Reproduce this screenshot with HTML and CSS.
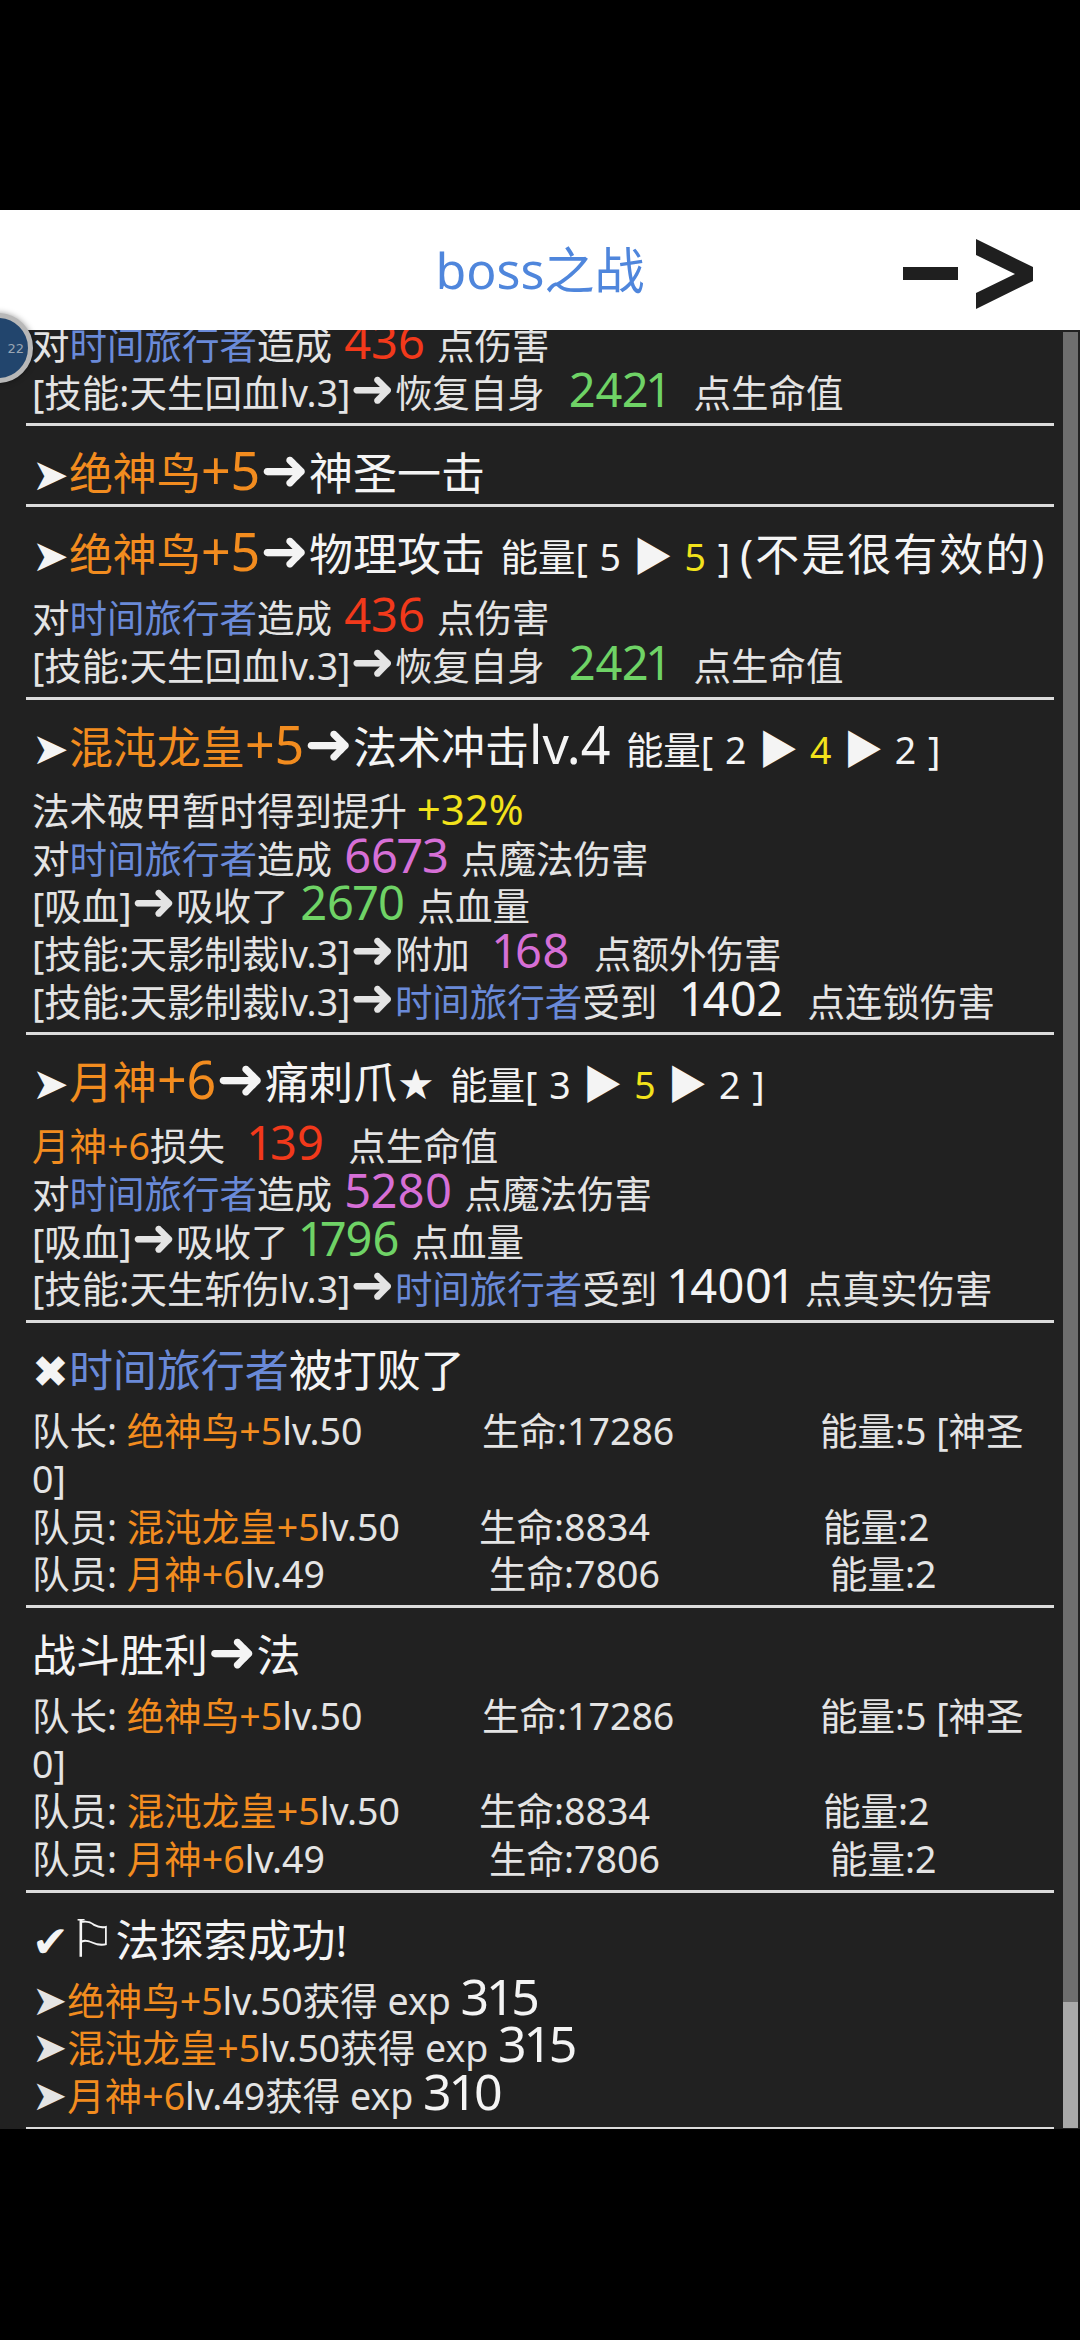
FILE: index.html
```html
<!DOCTYPE html>
<html lang="zh-CN">
<head>
    <meta charset="UTF-8">
    <meta name="viewport" content="width=device-width, initial-scale=1.0">
    <title>boss之战</title>
    <link rel="stylesheet" href="styles.css">
</head>
<body>
    <div class="statusbar"></div>
    <header class="titlebar">
        <span></span>
        <h1>boss之战</h1>
        <svg class="next" viewBox="0 0 136 78" width="136" height="78">
            <rect x="3" y="32" width="55" height="13" fill="#1f1f1f"/>
            <polygon points="76,4 133,32 133,46 76,74 76,58 115,39 76,20" fill="#1f1f1f"/>
        </svg>
    </header>
    <div class="bubble"><span>22</span></div>
    <main class="log">
        <div class="feed">
            <div class="entry">
                <p class="head"><span class="sym">➤</span><span class="o">绝神鸟<span class="en">+5</span></span><span class="arr">➜</span>物理攻击 <span class="small">能量[ 5 <span class="tri">▶</span> <span class="y">5</span> ]</span><span class="note">(不是很有效的)</span></p>
                <p class="line">对<span class="b">时间旅行者</span>造成<span class="num r"> 436 </span>点伤害</p>
                <p class="line">[技能:天生回血lv.3]<span class="arr">➜</span>恢复自身<span class="num g">  2421  </span>点生命值</p>
            </div>
            <div class="entry">
                <p class="head"><span class="sym">➤</span><span class="o">绝神鸟<span class="en">+5</span></span><span class="arr">➜</span>神圣一击</p>
            </div>
            <div class="entry">
                <p class="head"><span class="sym">➤</span><span class="o">绝神鸟<span class="en">+5</span></span><span class="arr">➜</span>物理攻击 <span class="small">能量[ 5 <span class="tri">▶</span> <span class="y">5</span> ]</span><span class="note">(不是很有效的)</span></p>
                <p class="line">对<span class="b">时间旅行者</span>造成<span class="num r"> 436 </span>点伤害</p>
                <p class="line">[技能:天生回血lv.3]<span class="arr">➜</span>恢复自身<span class="num g">  2421  </span>点生命值</p>
            </div>
            <div class="entry">
                <p class="head"><span class="sym">➤</span><span class="o">混沌龙皇<span class="en">+5</span></span><span class="arr">➜</span>法术冲击<span class="en">lv.4</span> <span class="small">能量[ 2 <span class="tri">▶</span> <span class="y">4</span> <span class="tri">▶</span> 2 ]</span></p>
                <p class="line">法术破甲暂时得到提升 <span class="pct y">+32%</span></p>
                <p class="line">对<span class="b">时间旅行者</span>造成<span class="num p"> 6673 </span>点魔法伤害</p>
                <p class="line">[吸血]<span class="arr">➜</span>吸收了<span class="num g"> 2670 </span>点血量</p>
                <p class="line">[技能:天影制裁lv.3]<span class="arr">➜</span>附加<span class="num p">  168  </span>点额外伤害</p>
                <p class="line">[技能:天影制裁lv.3]<span class="arr">➜</span><span class="b">时间旅行者</span>受到<span class="num w">  1402  </span>点连锁伤害</p>
            </div>
            <div class="entry">
                <p class="head"><span class="sym">➤</span><span class="o">月神<span class="en">+6</span></span><span class="arr">➜</span>痛刺爪<span class="star">★</span> <span class="small">能量[ 3 <span class="tri">▶</span> <span class="y">5</span> <span class="tri">▶</span> 2 ]</span></p>
                <p class="line"><span class="o">月神+6</span>损失<span class="num r">  139  </span>点生命值</p>
                <p class="line">对<span class="b">时间旅行者</span>造成<span class="num p"> 5280 </span>点魔法伤害</p>
                <p class="line">[吸血]<span class="arr">➜</span>吸收了<span class="num g"> 1796 </span>点血量</p>
                <p class="line">[技能:天生斩伤lv.3]<span class="arr">➜</span><span class="b">时间旅行者</span>受到<span class="num w"> 14001 </span>点真实伤害</p>
            </div>
            <div class="entry">
                <p class="head"><span class="sym">✖</span><span class="b">时间旅行者</span>被打败了</p>
                <p class="line"><span class="col lead-a">队长: <span class="o">绝神鸟+5</span>lv.50</span><span class="col lead-b">生命:17286</span>能量:5 [神圣<br>0]</p>
                <p class="line"><span class="col m1-a">队员: <span class="o">混沌龙皇+5</span>lv.50</span><span class="col m1-b">生命:8834</span>能量:2</p>
                <p class="line"><span class="col m2-a">队员: <span class="o">月神+6</span>lv.49</span><span class="col m2-b">生命:7806</span>能量:2</p>
            </div>
            <div class="entry">
                <p class="head">战斗胜利<span class="arr">➜</span>法</p>
                <p class="line"><span class="col lead-a">队长: <span class="o">绝神鸟+5</span>lv.50</span><span class="col lead-b">生命:17286</span>能量:5 [神圣<br>0]</p>
                <p class="line"><span class="col m1-a">队员: <span class="o">混沌龙皇+5</span>lv.50</span><span class="col m1-b">生命:8834</span>能量:2</p>
                <p class="line"><span class="col m2-a">队员: <span class="o">月神+6</span>lv.49</span><span class="col m2-b">生命:7806</span>能量:2</p>
            </div>
            <div class="entry">
                <p class="head"><span class="sym">✔</span><span class="sym flag">⚐</span>法探索成功!</p>
                <p class="line"><span class="sym">➤</span><span class="o">绝神鸟+5</span>lv.50获得 exp <span class="exp">315</span></p>
                <p class="line"><span class="sym">➤</span><span class="o">混沌龙皇+5</span>lv.50获得 exp <span class="exp">315</span></p>
                <p class="line"><span class="sym">➤</span><span class="o">月神+6</span>lv.49获得 exp <span class="exp">310</span></p>
            </div>
        </div>
        <div class="scrollbar"><div class="thumb"></div></div>
    </main>
</body>
</html>
```

FILE: styles.css
```css
body {
    margin: 0;
    padding: 0;
    background-color: #000;
    font-family: "Noto Sans", "Noto Sans CJK SC", "DejaVu Sans", sans-serif;
    position: relative;
}
p {
    margin: 0;
}
.statusbar {
    height: 210px;
}
.titlebar {
    height: 120px;
    background-color: #fff;
    display: grid;
    grid-template-columns: 1fr auto 1fr;
    align-items: center;
}
.titlebar h1 {
    margin: 0;
    font-size: 50px;
    font-weight: 400;
    color: #4f86dc;
    line-height: 1;
}
.titlebar .next {
    justify-self: end;
    margin-right: 44px;
    margin-top: 8px;
}
.bubble {
    position: absolute;
    left: -37px;
    top: 313px;
    width: 60px;
    height: 60px;
    border-radius: 50%;
    border: 5px solid #b8b8b8;
    background-color: #22456d;
    box-shadow: 0 0 6px rgba(0,0,0,0.4);
    display: flex;
    align-items: center;
    justify-content: flex-end;
    z-index: 2;
}
.bubble span {
    font-family: "DejaVu Sans", sans-serif;
    font-size: 13px;
    color: #9aa6b4;
    margin-right: 4px;
}
.log {
    height: 1799px;
    background-color: #212121;
    display: flex;
    overflow: hidden;
}
.feed {
    flex: 1;
    padding: 0 9px 0 26px;
    margin-top: -96px;
}
.entry {
    padding: 23px 6px 7px;
    border-bottom: 3px solid #dcdcdc;
}
.head {
    font-size: 44px;
    line-height: 48px;
    color: #f4f4f4;
    margin-bottom: 13px;
    white-space: pre;
}
.head:last-child {
    margin-bottom: 0;
}
.line {
    font-size: 37.5px;
    line-height: 47.7px;
    color: #e4e4e4;
    white-space: pre-wrap;
}
.small {
    font-size: 37.5px;
    word-spacing: 2px;
    margin-left: 4px;
}
.note {
    margin-left: 10px;
    letter-spacing: 2px;
}
.sym, .arr, .star {
    font-family: "DejaVu Sans", sans-serif;
    line-height: 0;
}
.line .sym {
    font-size: 42px;
}
.head .arr {
    font-size: 58px;
}
.line .arr {
    font-size: 53px;
}
.star {
    font-size: 42px;
}
.flag {
    font-size: 52px;
}
.tri {
    font-family: "Noto Sans CJK SC", sans-serif;
    font-size: 40px;
    line-height: 0;
}
.en {
    font-size: 52px;
    line-height: 0;
}
.num {
    font-size: 47px;
    line-height: 0;
    font-variant-numeric: proportional-nums;
}
.pct {
    font-size: 42px;
    line-height: 0;
}
.exp {
    font-size: 50px;
    line-height: 0;
    color: #f4f4f4;
    font-variant-numeric: proportional-nums;
}
.col {
    display: inline-block;
}
.lead-a { width: 450px; }
.lead-b { width: 338px; }
.m1-a { width: 447px; }
.m1-b { width: 344px; }
.m2-a { width: 457px; }
.m2-b { width: 341px; }
.o { color: #f28c1f; }
.b { color: #6a8ad8; }
.r { color: #f2391b; }
.g { color: #6fd366; }
.p { color: #d66fd6; }
.y { color: #f2e21b; }
.w { color: #f4f4f4; }
.scrollbar {
    width: 15px;
    margin: 2px 2px 1px 0;
    background-color: #6e6e6e;
    display: flex;
    flex-direction: column;
    justify-content: flex-end;
}
.thumb {
    height: 126px;
    background-color: #a9a9a9;
}
```
